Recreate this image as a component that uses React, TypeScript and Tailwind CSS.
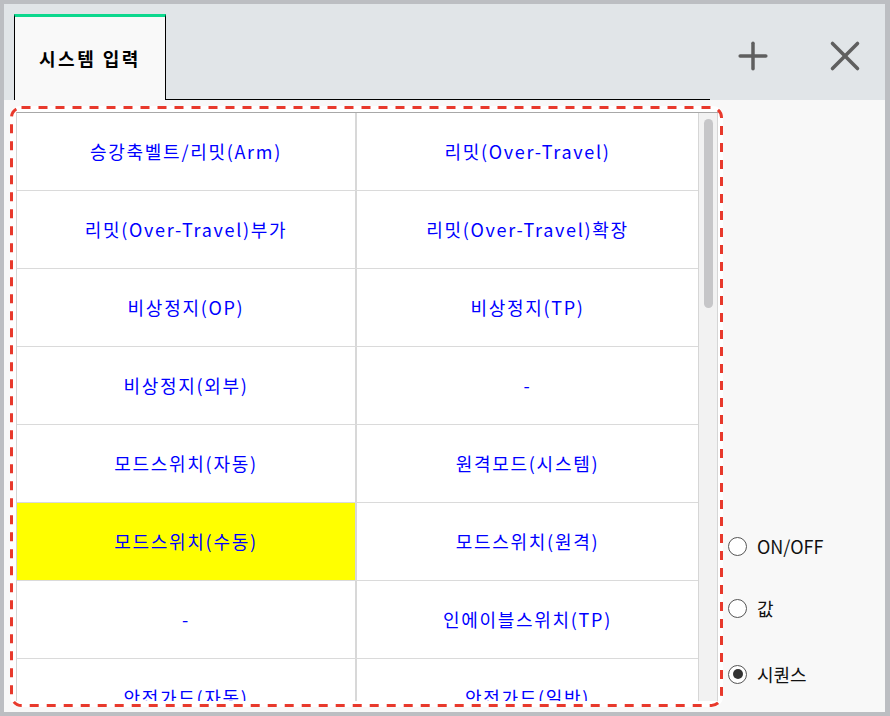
import { Plus, X } from "lucide-react";

const FONT = "font-['Noto_Sans_CJK_KR','Noto_Sans',sans-serif]";

const ROWS: [string, string][] = [
  ["승강축벨트/리밋(Arm)", "리밋(Over-Travel)"],
  ["리밋(Over-Travel)부가", "리밋(Over-Travel)확장"],
  ["비상정지(OP)", "비상정지(TP)"],
  ["비상정지(외부)", "-"],
  ["모드스위치(자동)", "원격모드(시스템)"],
  ["모드스위치(수동)", "모드스위치(원격)"],
  ["-", "인에이블스위치(TP)"],
  ["안전가드(자동)", "안전가드(일반)"],
];

const SELECTED = "모드스위치(수동)";

function Cell({ label }: { label: string }) {
  const active = label === SELECTED;
  return (
    <div
      className={`flex items-center justify-center text-[18px] tracking-[1.7px] text-[#0000ff] ${
        active ? "bg-[#ffff00]" : "bg-white"
      }`}
    >
      {label}
    </div>
  );
}

function Radio({ label, checked, className }: { label: string; checked?: boolean; className?: string }) {
  return (
    <label className={`flex h-[30px] items-center gap-[10px] ${className ?? ""}`}>
      <span className="flex h-[19px] w-[19px] items-center justify-center rounded-full border-[1.5px] border-[#555] bg-white">
        {checked && <span className="h-[10px] w-[10px] rounded-full bg-[#333]" />}
      </span>
      <span className="text-[18px] text-[#111]">{label}</span>
    </label>
  );
}

export default function App() {
  return (
    <div className={`${FONT} flex h-[716px] w-[890px] flex-col bg-[#bcbec2] pb-[4px] pl-[4px] pr-[5px] pt-[4px]`}>
      {/* Tab strip */}
      <div className="flex h-[96px] shrink-0 items-stretch bg-[#e1e5e8] pl-[10px] pt-[10px]">
        <div className="flex w-[152px] items-center justify-center border-l border-r border-t-[3px] border-l-black border-r-black border-t-[#0cd88e] bg-[#f9f9f9] text-[18px] font-bold tracking-[2.5px] text-black">
          시스템 입력
        </div>
        <div className="w-[544px] border-b border-black" />
        <div className="flex flex-1 items-center pb-[2px] pl-[25px] text-[#5f5f5f]">
          <Plus size={44} strokeWidth={1.9} className="-m-[4px]" />
          <X size={50} strokeWidth={1.7} className="-my-[7px] ml-[49px]" />
        </div>
      </div>

      {/* Body */}
      <div className="flex flex-1 bg-[#f8f8f8]">
        <div className="relative ml-[6px] mt-[6px] h-[601px] w-[713px] rounded-[10px] bg-white pb-[6px] pl-[6px] pr-[5px] pt-[6px]">
          <div className="flex h-full overflow-hidden border-l border-t border-l-[#d4d4d4] border-t-[#a8a8a8]">
            <div className="flex-1 overflow-hidden">
              {ROWS.map(([a, b], i) => (
                <div key={i} className="grid h-[78px] grid-cols-[338px_341px] gap-x-[2px] border-b border-[#dadada] bg-[#d8d8d8]">
                  <Cell label={a} />
                  <Cell label={b} />
                </div>
              ))}
            </div>
            {/* Scrollbar */}
            <div className="w-[20px] shrink-0 border-l border-r border-[#d6d6d6] bg-[#f2f2f2] pl-[5px] pt-[6px]">
              <div className="h-[189px] w-[9px] rounded-full bg-[#c6c6c8]" />
            </div>
          </div>
          {/* Dashed highlight outline */}
          <svg className="pointer-events-none absolute inset-0" width="713" height="601">
            <rect
              x="1.5"
              y="1.5"
              width="710"
              height="598"
              rx="10"
              fill="none"
              stroke="#e8392c"
              strokeWidth="3"
              strokeDasharray="9 8"
            />
          </svg>
        </div>

        <div className="flex flex-1 flex-col pl-[5px] pt-[431px]">
          <Radio label="ON/OFF" />
          <Radio label="값" className="mt-[32px]" />
          <Radio label="시퀀스" checked className="mt-[36px]" />
        </div>
      </div>
    </div>
  );
}
